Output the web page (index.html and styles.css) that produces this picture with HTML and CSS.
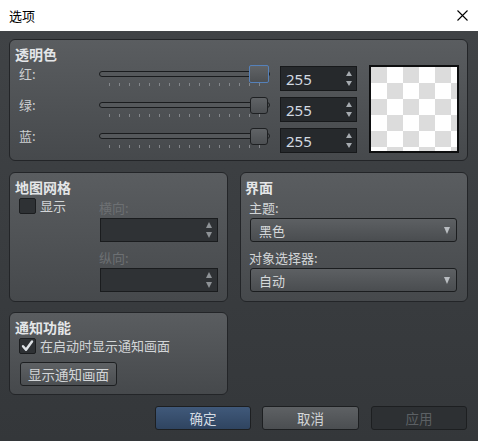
FILE: index.html
```html
<!DOCTYPE html>
<html lang="zh-CN">
<head>
<meta charset="utf-8">
<title>选项</title>
<link rel="stylesheet" href="styles.css">
</head>
<body>
<div class="window">
  <div class="titlebar">
    <span class="title">选项</span>
    <svg class="close" width="11" height="11" viewBox="0 0 11 11"><path d="M0.5 0.5 L10.5 10.5 M10.5 0.5 L0.5 10.5" stroke="#000" stroke-width="1.1" fill="none"/></svg>
  </div>
  <div class="client">
    <div class="group g-color">
      <div class="gtitle">透明色</div>
      <div class="color-body">
        <div class="rows">
          <div class="row">
            <span class="lbl">红:</span>
            <div class="slider">
              <div class="groove"></div>
              <div class="ticks"></div>
              <div class="handle focus"></div>
            </div>
            <div class="spin"><span class="val">255</span><span class="arrows"><i class="up"></i><i class="down"></i></span></div>
          </div>
          <div class="row">
            <span class="lbl">绿:</span>
            <div class="slider">
              <div class="groove"></div>
              <div class="ticks"></div>
              <div class="handle"></div>
            </div>
            <div class="spin"><span class="val">255</span><span class="arrows"><i class="up"></i><i class="down"></i></span></div>
          </div>
          <div class="row">
            <span class="lbl">蓝:</span>
            <div class="slider">
              <div class="groove"></div>
              <div class="ticks"></div>
              <div class="handle"></div>
            </div>
            <div class="spin"><span class="val">255</span><span class="arrows"><i class="up"></i><i class="down"></i></span></div>
          </div>
        </div>
        <div class="preview"><div class="checker"></div></div>
      </div>
    </div>

    <div class="grid">
      <div class="group g-grid">
        <div class="gtitle">地图网格</div>
        <div class="grid-body">
          <div class="check-col">
            <div class="check-row"><span class="cb"></span><span class="cblbl">显示</span></div>
          </div>
          <div class="dir-col">
            <div class="dlbl first">横向:</div>
            <div class="spin dis"><span class="val"></span><span class="arrows"><i class="up"></i><i class="down"></i></span></div>
            <div class="dlbl">纵向:</div>
            <div class="spin dis"><span class="val"></span><span class="arrows"><i class="up"></i><i class="down"></i></span></div>
          </div>
        </div>
      </div>

      <div class="group g-ui">
        <div class="gtitle">界面</div>
        <div class="ulbl first">主题:</div>
        <div class="combo"><span>黑色</span><i class="down"></i></div>
        <div class="ulbl">对象选择器:</div>
        <div class="combo"><span>自动</span><i class="down"></i></div>
      </div>

      <div class="group g-notify">
        <div class="gtitle">通知功能</div>
        <div class="check-row nrow">
          <span class="cb checked"><svg width="16" height="16" viewBox="0 0 16 16"><path d="M3.2 8.2 L6.4 12 L12.8 3.2" stroke="#dfe3e7" stroke-width="2.6" fill="none" stroke-linecap="round" stroke-linejoin="round"/></svg></span>
          <span class="cblbl">在启动时显示通知画面</span>
        </div>
        <div class="btn nbtn">显示通知画面</div>
      </div>
    </div>

    <div class="buttons">
      <div class="btn primary">确定</div>
      <div class="btn cancel">取消</div>
      <div class="btn disabled">应用</div>
    </div>
  </div>
</div>
</body>
</html>
```

FILE: styles.css
```css
* { box-sizing: border-box; }
html, body { margin: 0; padding: 0; }
body {
  width: 478px;
  height: 441px;
  overflow: hidden;
  font-family: "Noto Sans CJK SC", "Noto Sans", sans-serif;
  font-size: 13px;
  color: #c9ccce;
}
.window {
  width: 478px;
  height: 441px;
  display: flex;
  flex-direction: column;
}
.titlebar {
  height: 31px;
  flex: none;
  background: #ffffff;
  display: flex;
  align-items: center;
  justify-content: space-between;
  padding: 0 10px 0 9px;
}
.title { color: #000; font-size: 13px; line-height: 16px; }
.close { display: block; margin-top: 0; }

.client {
  flex: 1;
  background: linear-gradient(#404346, #34373a);
  padding: 8px 10px 0 9px;
}

.group {
  border: 1px solid #232528;
  border-radius: 6px;
  background: linear-gradient(#5a5d60, #46494c);
  padding: 6px 8px 0 5px;
}
.gtitle {
  font-size: 14px;
  font-weight: bold;
  line-height: 16px;
  color: #e4e6e8;
}

/* colour group */
.g-color { height: 122px; }
.color-body { display: flex; margin-top: 3px; }
.rows {
  display: flex;
  flex-direction: column;
  gap: 6px;
  padding: 1px 0 0 4px;
}
.row { display: flex; height: 25px; align-items: flex-start; }
.lbl { width: 80px; line-height: 16px; color: #cdd0d2; }
.slider { position: relative; width: 171px; height: 25px; }
.groove {
  position: absolute;
  left: 0; top: 5px;
  width: 171px; height: 6px;
  border: 1px solid #1a1c1e;
  border-radius: 3px;
  background: #55585b;
}
.ticks {
  position: absolute;
  left: 10px; top: 17px;
  width: 151px; height: 3px;
  background: repeating-linear-gradient(to right, #84878b 0 1px, transparent 1px 10px);
}
.handle {
  position: absolute;
  left: 151px; top: 0;
  width: 18px; height: 17px;
  border: 1px solid #1e2022;
  border-radius: 3px;
  background: linear-gradient(#606366, #4d5053);
}
.handle.focus {
  left: 150px; top: -1px;
  width: 20px; height: 18px;
  border: 1px solid #5581ba;
  border-radius: 2px;
}

.spin {
  width: 77px; height: 25px;
  margin-left: 10px;
  border: 1px solid #17191b;
  background: #26292c;
  display: flex;
  align-items: center;
  justify-content: space-between;
  padding: 0 4px 0 5px;
}
.val {
  font-family: "Noto Sans", "Noto Sans CJK SC", sans-serif;
  font-size: 15px;
  line-height: 18px;
  color: #d3dae1;
}
.arrows { display: flex; flex-direction: column; gap: 5px; }
.up, .down { display: block; width: 0; height: 0; }
.up {
  border-left: 3.5px solid transparent;
  border-right: 3.5px solid transparent;
  border-bottom: 5px solid #a6abb0;
}
.down {
  border-left: 3.5px solid transparent;
  border-right: 3.5px solid transparent;
  border-top: 5px solid #a6abb0;
}

.preview {
  width: 90px; height: 88px;
  margin-left: 12px;
  border: 2px solid #0d0e0f;
  background: #fff;
}
.checker {
  width: 100%; height: 100%;
  background: conic-gradient(#ffffff 0 25%, #dcdcdc 0 50%, #ffffff 0 75%, #dcdcdc 0);
  background-size: 32px 32px;
  background-position: 0 0;
}

/* grid area */
.grid {
  display: grid;
  grid-template-columns: 219px 228px;
  grid-template-rows: 130px 83px;
  column-gap: 12px;
  row-gap: 10px;
  margin-top: 11px;
}
.g-grid { grid-column: 1; grid-row: 1; }
.g-ui { grid-column: 2; grid-row: 1; padding-left: 4px; }
.g-notify { grid-column: 1; grid-row: 2; }

.grid-body { display: flex; margin-top: 3px; }
.check-col { width: 84px; padding-left: 4px; }
.check-row { display: flex; align-items: center; height: 16px; }
.cb {
  width: 17px; height: 16px;
  border: 1px solid #1b1d1f;
  border-radius: 2px;
  background: #2e3134;
  display: flex; align-items: center; justify-content: center;
}
.cb svg { display: block; }
.cblbl { margin-left: 4px; line-height: 16px; color: #d2d5d7; }
.dir-col { width: 119px; display: flex; flex-direction: column; }
.dlbl { line-height: 16px; margin-top: 8px; color: #6d7073; }
.dlbl.first { margin-top: 2px; }
.spin.dis {
  width: 118px; height: 24px;
  margin: 2px 0 0 1px;
  background: #2f3235;
  border-color: #1a1c1e;
  padding-right: 5px;
  align-items: center;
}
.spin.dis .arrows { gap: 4px; }
.spin.dis .up { border-bottom-color: #8e9296; border-bottom-width: 6px; }
.spin.dis .down { border-top-color: #8e9296; border-top-width: 6px; }

.ulbl { line-height: 16px; margin: 8px 0 0 4px; color: #d2d5d7; }
.ulbl.first { margin-top: 5px; }
.combo {
  width: 207px; height: 24px;
  margin: 2px 0 0 5px;
  border: 1px solid #1b1d1f;
  border-radius: 3px;
  background: linear-gradient(#5d6063, #4a4d50);
  display: flex;
  align-items: center;
  justify-content: space-between;
  padding: 0 6px 0 8px;
  color: #d6d9db;
  line-height: 16px;
}
.combo span { margin-top: 2px; }
.combo .down {
  border-left: 3.5px solid transparent;
  border-right: 3.5px solid transparent;
  border-top: 7px solid #b9bdc1;
}

.nrow { margin: 3px 0 0 4px; }
.btn {
  height: 24px;
  border: 1px solid #1d1f21;
  border-radius: 3px;
  display: flex;
  align-items: center;
  justify-content: center;
  line-height: 16px;
  color: #d3d6d8;
  background: linear-gradient(#5e6164, #4b4e51);
}
.nbtn { width: 97px; margin: 8px 0 0 5px; font-size: 13.5px; }

.buttons {
  display: flex;
  justify-content: flex-end;
  margin: 11px 1px 0 0;
}
.buttons .btn { width: 97px; font-size: 13.5px; }
.primary {
  width: 96px !important;
  background: linear-gradient(#40597a, #2f4460);
  color: #d4dbe3;
}
.cancel { margin-left: 11px; }
.disabled {
  width: 96px !important;
  margin-left: 12px;
  background: #2d3033;
  color: #5c6064;
}
```
